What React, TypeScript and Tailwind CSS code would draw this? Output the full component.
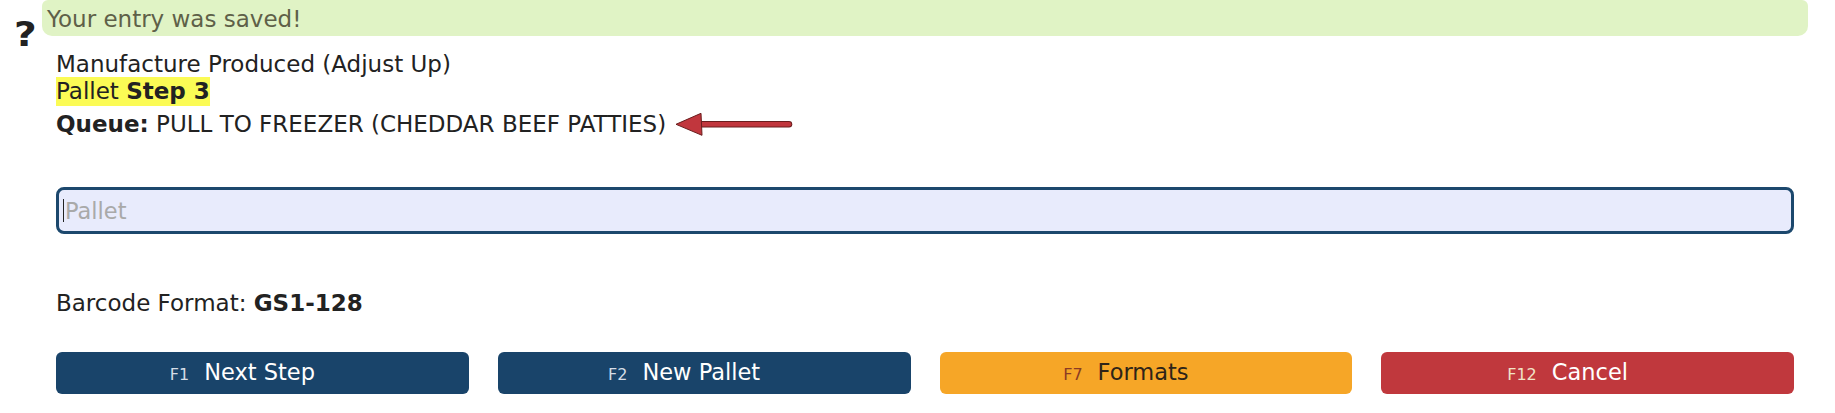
import React from "react";

function Arrow() {
  return (
    <svg width="118" height="25" viewBox="0 0 118 25" className="ml-[9px] shrink-0">
      <line x1="22" y1="12.3" x2="114" y2="12.3" stroke="#6a1d1d" strokeWidth="6.5" strokeLinecap="round" />
      <line x1="22" y1="12.3" x2="114" y2="12.3" stroke="#c1363d" strokeWidth="4.5" strokeLinecap="round" />
      <polygon points="1,12.3 26,1.3 27,23.3" fill="#c1363d" stroke="#6a1d1d" strokeWidth="1" strokeLinejoin="round" />
    </svg>
  );
}

function Btn({ k, label, cls, kcls }: { k: string; label: string; cls: string; kcls: string }) {
  return (
    <div className={`h-[42px] rounded-[6px] flex items-center justify-center pr-[40px] ${cls}`}>
      <span className="flex items-baseline gap-[15px]">
        <span className={`text-[16px] ${kcls}`}>{k}</span>
        <span className="text-[22.5px]">{label}</span>
      </span>
    </div>
  );
}

export default function App() {
  return (
    <div className="w-[1835px] h-[413px] bg-white overflow-hidden font-['DejaVu_Sans',sans-serif] text-[#222]">
      <div className="flex">
        <div className="w-[42px] shrink-0 pt-[15px] pl-[14px]">
          <span className="block font-bold text-[34px] leading-[38px] text-[#222] scale-x-[1.15] origin-left">?</span>
        </div>
        <div className="w-[1766px]">
          <div className="h-[36px] rounded-b-[10px] rounded-t-[6px] bg-[#e0f3c5] pl-[5px] pt-[2px] leading-[34px] text-[23px] text-[#5e6048]">
            Your entry was saved!
          </div>
          <div className="px-[14px] text-[23px]">
            <div className="mt-[16px] leading-[25px]">Manufacture Produced (Adjust Up)</div>
            <div className="leading-[29px]">
              <span className="inline-block h-[29px] bg-[#fbfb55]">
                Pallet <b>Step 3</b>
              </span>
            </div>
            <div className="mt-[3px] h-[30px] flex items-center leading-[30px]">
              <span>
                <b>Queue:</b> PULL TO FREEZER (CHEDDAR BEEF PATTIES)
              </span>
              <Arrow />
            </div>
            <div className="mt-[48px] relative">
              <input
                className="block w-full h-[47px] border-[3px] border-[#1c486d] rounded-[8px] bg-[#e8ebfc] px-[6px] text-[22.5px] placeholder:text-[#a9a9a9] outline-none"
                placeholder="Pallet"
              />
              <div className="absolute left-[7px] top-[12px] w-[1px] h-[23px] bg-[#222]" />
            </div>
            <div className="mt-[56px] leading-[27px]">
              Barcode Format: <b>GS1-128</b>
            </div>
            <div className="mt-[35px] grid grid-cols-4 gap-[29px]">
              <Btn k="F1" label="Next Step" cls="bg-[#19446a] text-white" kcls="text-[#d5dde6]" />
              <Btn k="F2" label="New Pallet" cls="bg-[#19446a] text-white" kcls="text-[#d5dde6]" />
              <Btn k="F7" label="Formats" cls="bg-[#f6a627] text-[#2e2418]" kcls="text-[#8a3b24]" />
              <Btn k="F12" label="Cancel" cls="bg-[#c0383d] text-white" kcls="text-[#f1e3c7]" />
            </div>
          </div>
        </div>
      </div>
    </div>
  );
}
